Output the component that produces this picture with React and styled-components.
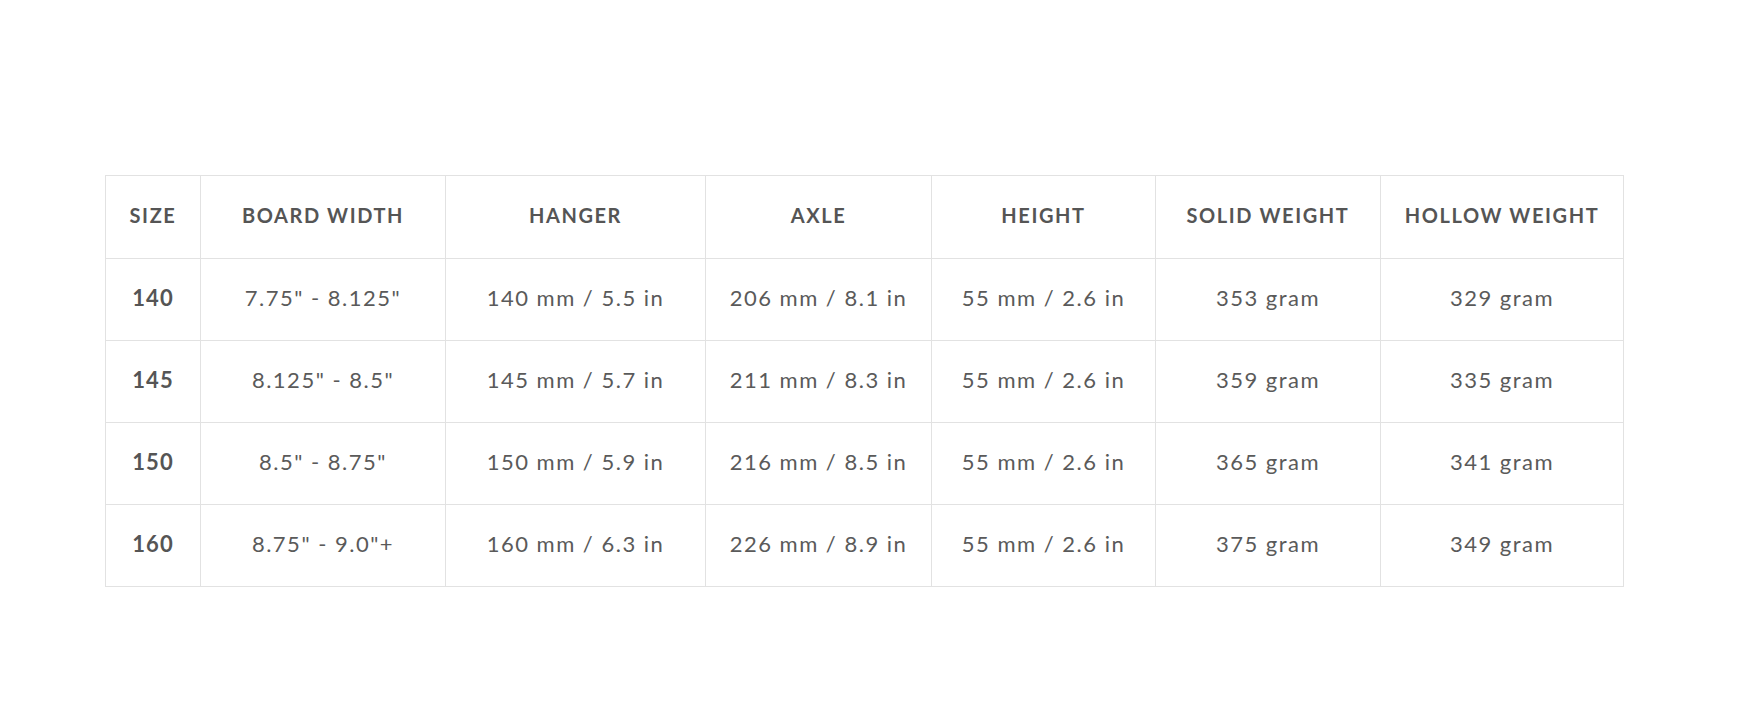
import React from 'react';
import styled, { createGlobalStyle } from 'styled-components';

const GlobalStyle = createGlobalStyle`
  html, body {
    margin: 0;
    padding: 0;
    background: #fff;
  }
  body {
    font-family: Lato, "Open Sans", Arial, sans-serif;
  }
`;

const Page = styled.div`
  width: 1742px;
  height: 724px;
  padding: 175px 0 0 105px;
  box-sizing: border-box;
  overflow: hidden;
`;

const SpecTable = styled.table`
  border-collapse: collapse;
  table-layout: fixed;
  width: 1518px;
  border: 1px solid #e2e2e2;
`;

const HeadCell = styled.th`
  height: 78px;
  padding: 0 0 4px;
  border: 1px solid #e2e2e2;
  text-align: center;
  vertical-align: middle;
  font-size: 20px;
  font-weight: 700;
  letter-spacing: 1.6px;
  color: #555;
  text-transform: uppercase;
`;

const Cell = styled.td`
  height: 76px;
  padding: 0 0 5px;
  border: 1px solid #e2e2e2;
  text-align: center;
  vertical-align: middle;
  font-size: 22px;
  font-weight: ${(p) => (p.$bold ? 700 : 400)};
  letter-spacing: ${(p) => (p.$bold ? '1px' : '1.5px')};
  color: ${(p) => (p.$bold ? '#555' : '#5a5a5a')};
`;

const columns = [
  { label: 'Size', width: 95 },
  { label: 'Board Width', width: 245 },
  { label: 'Hanger', width: 260 },
  { label: 'Axle', width: 226 },
  { label: 'Height', width: 224 },
  { label: 'Solid Weight', width: 225 },
  { label: 'Hollow Weight', width: 243 },
];

const rows = [
  ['140', '7.75" - 8.125"', '140 mm / 5.5 in', '206 mm / 8.1 in', '55 mm / 2.6 in', '353 gram', '329 gram'],
  ['145', '8.125" - 8.5"', '145 mm / 5.7 in', '211 mm / 8.3 in', '55 mm / 2.6 in', '359 gram', '335 gram'],
  ['150', '8.5" - 8.75"', '150 mm / 5.9 in', '216 mm / 8.5 in', '55 mm / 2.6 in', '365 gram', '341 gram'],
  ['160', '8.75" - 9.0"+', '160 mm / 6.3 in', '226 mm / 8.9 in', '55 mm / 2.6 in', '375 gram', '349 gram'],
];

export default function App() {
  return (
    <Page>
      <GlobalStyle />
      <SpecTable>
        <colgroup>
          {columns.map((c) => (
            <col key={c.label} style={{ width: c.width }} />
          ))}
        </colgroup>
        <thead>
          <tr>
            {columns.map((c) => (
              <HeadCell key={c.label}>{c.label}</HeadCell>
            ))}
          </tr>
        </thead>
        <tbody>
          {rows.map((r) => (
            <tr key={r[0]}>
              {r.map((v, i) => (
                <Cell key={i} $bold={i === 0}>{v}</Cell>
              ))}
            </tr>
          ))}
        </tbody>
      </SpecTable>
    </Page>
  );
}
